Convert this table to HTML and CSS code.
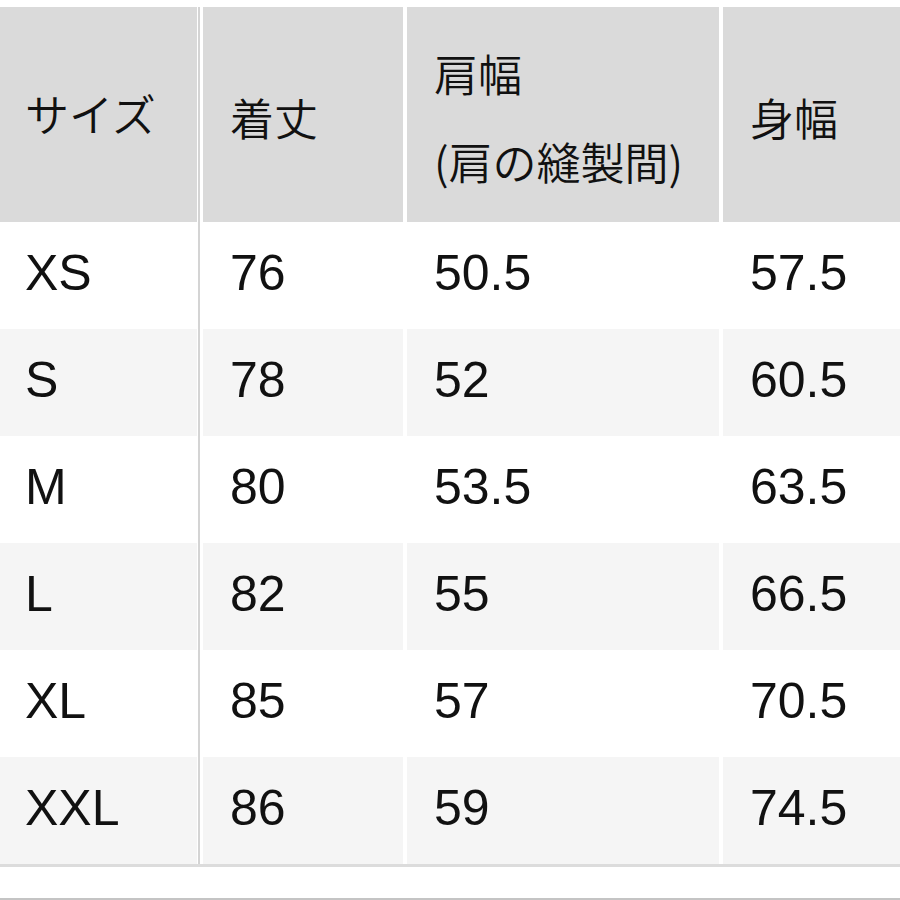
FILE: index.html
```html
<!DOCTYPE html>
<html lang="ja">
<head>
<meta charset="utf-8">
<link rel="stylesheet" href="styles.css">
</head>
<body>
<div class="page">
  <div class="table">
    <div class="row head">
      <div class="cell size"><span class="hsize">サイズ</span></div>
      <div class="cell len"><span>着丈</span></div>
      <div class="cell shoulder"><span>肩幅<br>(肩の縫製間)</span></div>
      <div class="cell width"><span>身幅</span></div>
    </div>
    <div class="row">
      <div class="cell size">XS</div><div class="cell len">76</div><div class="cell shoulder">50.5</div><div class="cell width">57.5</div>
    </div>
    <div class="row alt">
      <div class="cell size">S</div><div class="cell len">78</div><div class="cell shoulder">52</div><div class="cell width">60.5</div>
    </div>
    <div class="row">
      <div class="cell size">M</div><div class="cell len">80</div><div class="cell shoulder">53.5</div><div class="cell width">63.5</div>
    </div>
    <div class="row alt">
      <div class="cell size">L</div><div class="cell len">82</div><div class="cell shoulder">55</div><div class="cell width">66.5</div>
    </div>
    <div class="row">
      <div class="cell size">XL</div><div class="cell len">85</div><div class="cell shoulder">57</div><div class="cell width">70.5</div>
    </div>
    <div class="row alt">
      <div class="cell size">XXL</div><div class="cell len">86</div><div class="cell shoulder">59</div><div class="cell width">74.5</div>
    </div>
  </div>
  <div class="bottom-line"></div>
</div>
</body>
</html>
```

FILE: styles.css
```css
html, body {
  margin: 0;
  padding: 0;
  background: #ffffff;
}
.page {
  width: 900px;
  height: 900px;
  overflow: hidden;
  padding-top: 7px;
  box-sizing: border-box;
  background: #ffffff;
  display: flex;
  flex-direction: column;
}
.table {
  display: flex;
  flex-direction: column;
  border-bottom: 3px solid #dcdcdc;
}
.row {
  display: flex;
  height: 107px;
  background: #ffffff;
  font-family: "Liberation Sans", Arial, "Noto Sans CJK JP", sans-serif;
  font-size: 50px;
  color: #111111;
}
.row.head {
  height: 215px;
  font-family: "Noto Sans CJK JP", sans-serif;
  font-size: 44px;
  font-weight: 350;
  line-height: 88px;
}
.cell {
  display: flex;
  align-items: center;
  padding-left: 27px;
  padding-bottom: 5px;
  box-sizing: border-box;
  background: #ffffff;
}
.row.head .cell { background: #dadada; padding-top: 5px; padding-bottom: 0; }
.row.alt .cell { background: #f5f5f5; }
.cell.size {
  width: 197px;
  padding-left: 25px;
  margin-right: 6px;
  box-shadow: 1px 0 0 #ffffff, 3px 0 0 #d4d4d4;
}
.row.head .cell.size { padding-top: 0; padding-bottom: 4px; }
.cell.len { width: 200px; margin-right: 4px; }
.cell.shoulder { width: 312px; margin-right: 4px; }
.cell.width { flex: 1; }
.bottom-line {
  margin-top: auto;
  height: 2px;
  background: #c4c4c4;
}
```
